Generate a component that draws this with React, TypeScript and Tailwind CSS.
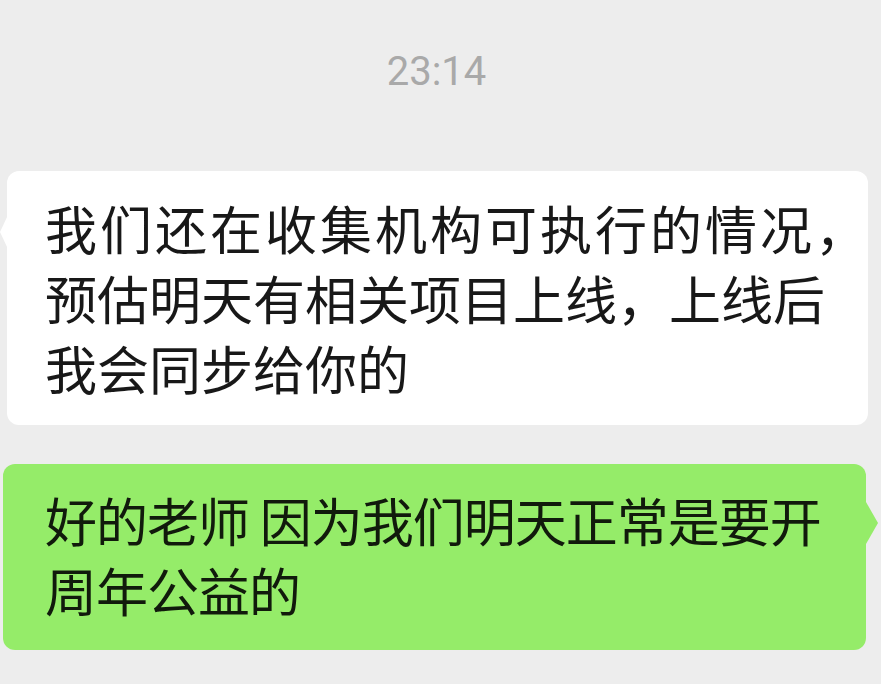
const CJK = "font-['Noto_Sans_CJK_SC','Noto_Sans',sans-serif]";

type Line = { text: string; className?: string };

function Received({ lines }: { lines: Line[] }) {
  return (
    <div className="relative pl-[7px] pr-[13px]">
      {/* bubble tail */}
      <div className="absolute left-0 top-[44px] h-0 w-0 border-y-[17px] border-r-[8px] border-y-transparent border-r-white" />
      <div className={`rounded-[12px] bg-white pl-[38px] pr-[10px] pt-[22px] pb-[22px] text-[52px] leading-[70px] text-[#181818] ${CJK}`}>
        {lines.map((l, i) => (
          <div key={i} className={`whitespace-pre ${l.className ?? ""}`}>{l.text}</div>
        ))}
      </div>
    </div>
  );
}

function Sent({ lines }: { lines: Line[] }) {
  return (
    <div className="relative pl-[3px] pr-[15px]">
      <div className="absolute right-[3px] top-[38px] h-0 w-0 border-y-[21px] border-l-[12px] border-y-transparent border-l-[#95ec69]" />
      <div className={`rounded-[12px] bg-[#95ec69] pl-[42px] pr-[10px] pt-[21px] pb-[25px] text-[52px] leading-[70px] text-[#111a0c] ${CJK}`}>
        {lines.map((l, i) => (
          <div key={i} className={`whitespace-pre ${l.className ?? ""}`}>{l.text}</div>
        ))}
      </div>
    </div>
  );
}

export default function App() {
  return (
    <div className="h-[684px] w-[881px] overflow-hidden bg-[#ededed]">
      <div className="flex justify-center pt-[48px] pr-[8px] text-[40px] leading-[48px] text-[#a9a9a9] font-['Roboto','Noto_Sans',sans-serif]">
        23:14
      </div>

      <div className="mt-[75px] flex flex-col gap-[39px]">
        <Received
          lines={[
            { text: "我们还在收集机构可执行的情况，", className: "tracking-[3px]" },
            { text: "预估明天有相关项目上线，上线后" },
            { text: "我会同步给你的" },
          ]}
        />
        <Sent
          lines={[
            { text: "好的老师 因为我们明天正常是要开", className: "tracking-[-1px]" },
            { text: "周年公益的", className: "tracking-[-1px]" },
          ]}
        />
      </div>
    </div>
  );
}
